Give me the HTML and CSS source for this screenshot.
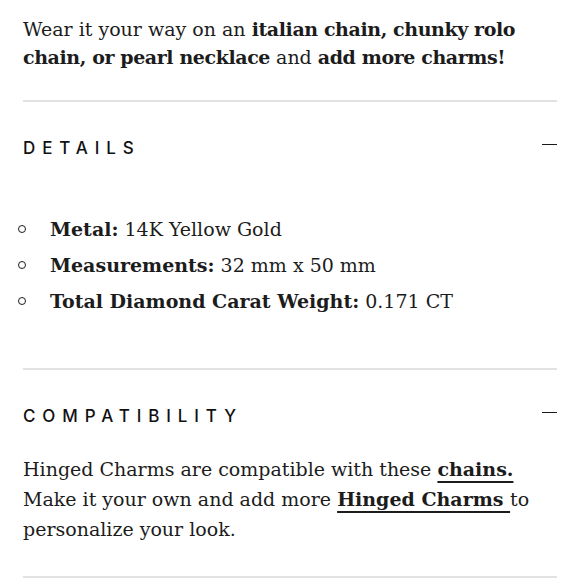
FILE: index.html
```html
<!DOCTYPE html>
<html lang="en">
<head>
<meta charset="utf-8">
<title>Hinged Charm Details</title>
<link rel="stylesheet" href="styles.css">
</head>
<body>
<main class="product-info">
  <p class="intro">Wear it your way on an <strong>italian chain, chunky rolo chain, or pearl necklace</strong> and <strong>add more charms!</strong></p>

  <section class="accordion details">
    <div class="accordion-header">
      <h2 class="accordion-title">DETAILS</h2>
      <span class="minus" aria-hidden="true"></span>
    </div>
    <ul class="spec-list">
      <li><span><strong>Metal:</strong> 14K Yellow Gold</span></li>
      <li><span><strong>Measurements:</strong> 32 mm x 50 mm</span></li>
      <li><span><strong>Total Diamond Carat Weight:</strong> 0.171 CT</span></li>
    </ul>
  </section>

  <section class="accordion compat">
    <div class="accordion-header">
      <h2 class="accordion-title">COMPATIBILITY</h2>
      <span class="minus" aria-hidden="true"></span>
    </div>
    <p class="compat-text">Hinged Charms are compatible with these <a href="#" class="link">chains.</a> Make it your own and add more <a href="#" class="link">Hinged Charms </a>to personalize your look.</p>
  </section>
</main>
</body>
</html>
```

FILE: styles.css
```css
html, body {
  margin: 0;
  padding: 0;
  background: #ffffff;
}

body {
  font-family: "DejaVu Serif", "Liberation Serif", serif;
  color: #1c1c1c;
}

.product-info {
  padding: 0 23px;
}

strong {
  font-weight: 700;
}

.intro {
  margin: 0;
  padding-top: 15px;
  padding-bottom: 29px;
  font-size: 19px;
  line-height: 28px;
  border-bottom: 2px solid #e2e2e2;
}

.intro strong {
  letter-spacing: -0.4px;
}

.accordion {
  border-bottom: 2px solid #e2e2e2;
}

.accordion-header {
  display: flex;
  align-items: center;
  justify-content: space-between;
  padding-top: 36px;
}

.accordion-title {
  margin: 0;
  font-family: "Inter", "Liberation Sans", sans-serif;
  font-weight: 500;
  font-size: 17px;
  line-height: 20px;
  letter-spacing: 6.9px;
  color: #111111;
}

.minus {
  width: 15px;
  height: 1.5px;
  background: #1a1a1a;
  margin-bottom: 7px;
}

.spec-list {
  list-style: none;
  margin: 53px 0 0 0;
  padding: 0 0 49px 0;
  font-size: 19px;
  line-height: 36px;
}

.spec-list li {
  display: flex;
  align-items: center;
}

.spec-list li::before {
  content: "";
  flex: none;
  box-sizing: border-box;
  width: 8px;
  height: 8px;
  border: 1.5px solid #1c1c1c;
  border-radius: 50%;
  margin-left: -5px;
  margin-right: 24px;
}

.compat-text {
  margin: 28px 0 0 0;
  padding-bottom: 32px;
  font-size: 19px;
  line-height: 30px;
}

.link {
  color: #1c1c1c;
  font-weight: 700;
  text-decoration: underline;
  text-decoration-thickness: 1.5px;
  text-underline-offset: 5px;
}
```
